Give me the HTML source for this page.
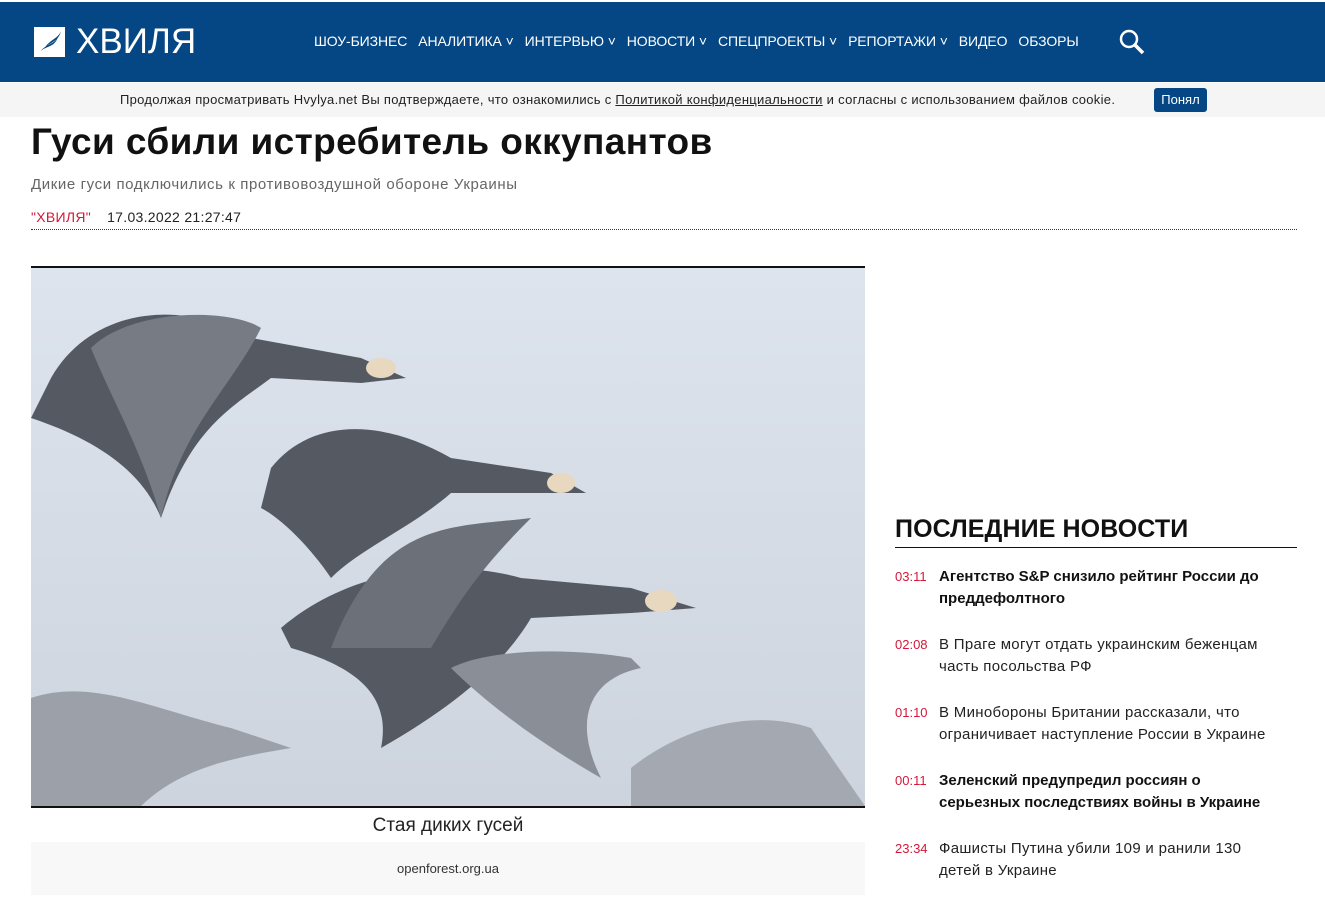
<!DOCTYPE html>
<html><head><meta charset="utf-8">
<style>
*{margin:0;padding:0;box-sizing:border-box}
body{width:1325px;height:909px;overflow:hidden;background:#fff;font-family:"Liberation Sans","DejaVu Sans",sans-serif;position:relative}
.top{position:absolute;left:0;top:2px;width:1325px;height:80px;background:#054784}
.logo{position:absolute;left:34px;top:27px;width:31px;height:30px;background:#fff}
.brand{position:absolute;left:76px;top:22px;color:#fff;font-size:35px;letter-spacing:0}
.nav{position:absolute;left:314px;top:33px;color:#fff;font-size:14px;white-space:nowrap;letter-spacing:-0.1px}
.nav span{margin-right:11px}
.cookie{position:absolute;left:0;top:83px;width:1325px;height:34px;background:#f5f5f5;font-size:13px;color:#222;letter-spacing:0.3px}
.cookie .t{position:absolute;left:120px;top:9px}
.cookie a{color:#222;text-decoration:underline}
.btn{position:absolute;left:1154px;top:88px;width:53px;height:24px;background:#054784;color:#fff;border-radius:3px;font-size:13px;text-align:center;line-height:24px}
h1{position:absolute;left:31px;top:121px;font-size:37px;font-weight:bold;color:#111;letter-spacing:0.4px}
.sub{position:absolute;left:31px;top:176px;font-size:15px;color:#666;letter-spacing:0.6px}
.meta{position:absolute;left:31px;top:209px;font-size:14px;color:#222;letter-spacing:0.3px}
.meta b{color:#d4183a;font-weight:normal;margin-right:16px}
.hr{position:absolute;left:31px;top:229px;width:1266px;border-top:1px dotted #333}
.img{position:absolute;left:31px;top:266px;width:834px;height:542px;border-top:2px solid #111;border-bottom:2px solid #111;background:linear-gradient(180deg,#dde4ee,#cdd4de);overflow:hidden}
.cap{position:absolute;left:31px;top:815px;width:834px;text-align:center;font-size:19px;color:#222}
.src{position:absolute;left:31px;top:842px;width:834px;height:53px;background:#f8f8f8;text-align:center;font-size:13px;color:#333;line-height:54px}
.lh{position:absolute;left:895px;top:515px;font-size:25px;font-weight:bold;color:#111;letter-spacing:0.1px}
.lhr{position:absolute;left:895px;top:547px;width:402px;border-top:1px solid #111}
.n{position:absolute;left:895px;width:385px;font-size:15px;line-height:22px;color:#222;letter-spacing:0.3px}
.n i{position:absolute;left:0;top:0;color:#d4183a;font-style:normal;font-size:13px;letter-spacing:0}
.n div{margin-left:44px}
.n.b div{font-weight:bold;color:#111;letter-spacing:0}
</style></head><body>
<div class="top"></div>
<div class="logo"><svg width="31" height="30" viewBox="0 0 31 30"><path d="M4 27 C10 18 20 22 24 10 C20 18 12 16 4 27Z M10 22 C16 14 24 16 27 4 C24 12 16 12 10 22Z" fill="#054784"/></svg></div>
<div class="brand">ХВИЛЯ</div>
<div class="nav"><span>ШОУ-БИЗНЕС</span><span>АНАЛИТИКА ˅</span><span>ИНТЕРВЬЮ ˅</span><span>НОВОСТИ ˅</span><span>СПЕЦПРОЕКТЫ ˅</span><span>РЕПОРТАЖИ ˅</span><span>ВИДЕО</span><span>ОБЗОРЫ</span></div>
<svg style="position:absolute;left:1119px;top:29px" width="26" height="26" viewBox="0 0 26 26"><circle cx="10" cy="10" r="8" stroke="#fff" stroke-width="2.5" fill="none"/><path d="M16 16 L24 24" stroke="#fff" stroke-width="3.5"/></svg>
<div class="cookie"><div class="t">Продолжая просматривать Hvylya.net Вы подтверждаете, что ознакомились с <a>Политикой конфиденциальности</a> и согласны с использованием файлов cookie.</div></div>
<div class="btn">Понял</div>
<h1>Гуси сбили истребитель оккупантов</h1>
<div class="sub">Дикие гуси подключились к противовоздушной обороне Украины</div>
<div class="meta"><b>"ХВИЛЯ"</b>17.03.2022 21:27:47</div>
<div class="hr"></div>
<div class="img"><svg width="834" height="538" viewBox="0 0 834 538">
<g fill="#555a62">
<path d="M20 110 C60 40 150 30 220 70 L330 90 L375 110 L330 115 L240 110 C200 140 160 160 130 250 C110 200 60 170 0 150Z"/>
<path d="M240 200 C280 150 350 150 420 190 L520 205 L555 225 L510 225 L420 225 C380 260 330 280 300 310 C280 280 250 250 230 240Z"/>
<path d="M250 360 C320 300 420 290 490 310 L600 320 L665 340 L600 345 L500 350 C470 400 420 440 350 480 C360 430 330 400 260 380Z"/>
<path d="M300 380 C350 250 420 260 500 250 C450 300 430 330 400 380Z" fill="#6b7079"/>
<path d="M60 80 C100 40 200 40 230 60 C200 120 150 160 130 250 C110 180 80 130 60 80Z" fill="#777c84"/>
<path d="M420 400 C460 380 540 380 600 390 L610 400 C560 410 540 450 570 510 C500 470 450 430 420 400Z" fill="#8a8f97"/>
<path d="M0 430 C60 410 120 440 200 460 L260 480 C200 490 150 500 110 538 L0 538Z" fill="#9ca1a9"/>
<path d="M600 500 C650 460 720 440 780 460 L834 538 L600 538Z" fill="#a4a9b1"/>
</g>
<g fill="#e8d8bf"><ellipse cx="350" cy="100" rx="15" ry="10"/><ellipse cx="530" cy="215" rx="14" ry="10"/><ellipse cx="630" cy="333" rx="16" ry="11"/></g>
</svg></div>
<div class="cap">Стая диких гусей</div>
<div class="src">openforest.org.ua</div>
<div class="lh">ПОСЛЕДНИЕ НОВОСТИ</div>
<div class="lhr"></div>
<div class="n b" style="top:566px"><i>03:11</i><div>Агентство S&amp;P снизило рейтинг России до преддефолтного</div></div>
<div class="n" style="top:634px"><i>02:08</i><div>В Праге могут отдать украинским беженцам часть посольства РФ</div></div>
<div class="n" style="top:702px"><i>01:10</i><div>В Минобороны Британии рассказали, что ограничивает наступление России в Украине</div></div>
<div class="n b" style="top:770px"><i>00:11</i><div>Зеленский предупредил россиян о серьезных последствиях войны в Украине</div></div>
<div class="n" style="top:838px"><i>23:34</i><div>Фашисты Путина убили 109 и ранили 130 детей в Украине</div></div>
</body></html>
